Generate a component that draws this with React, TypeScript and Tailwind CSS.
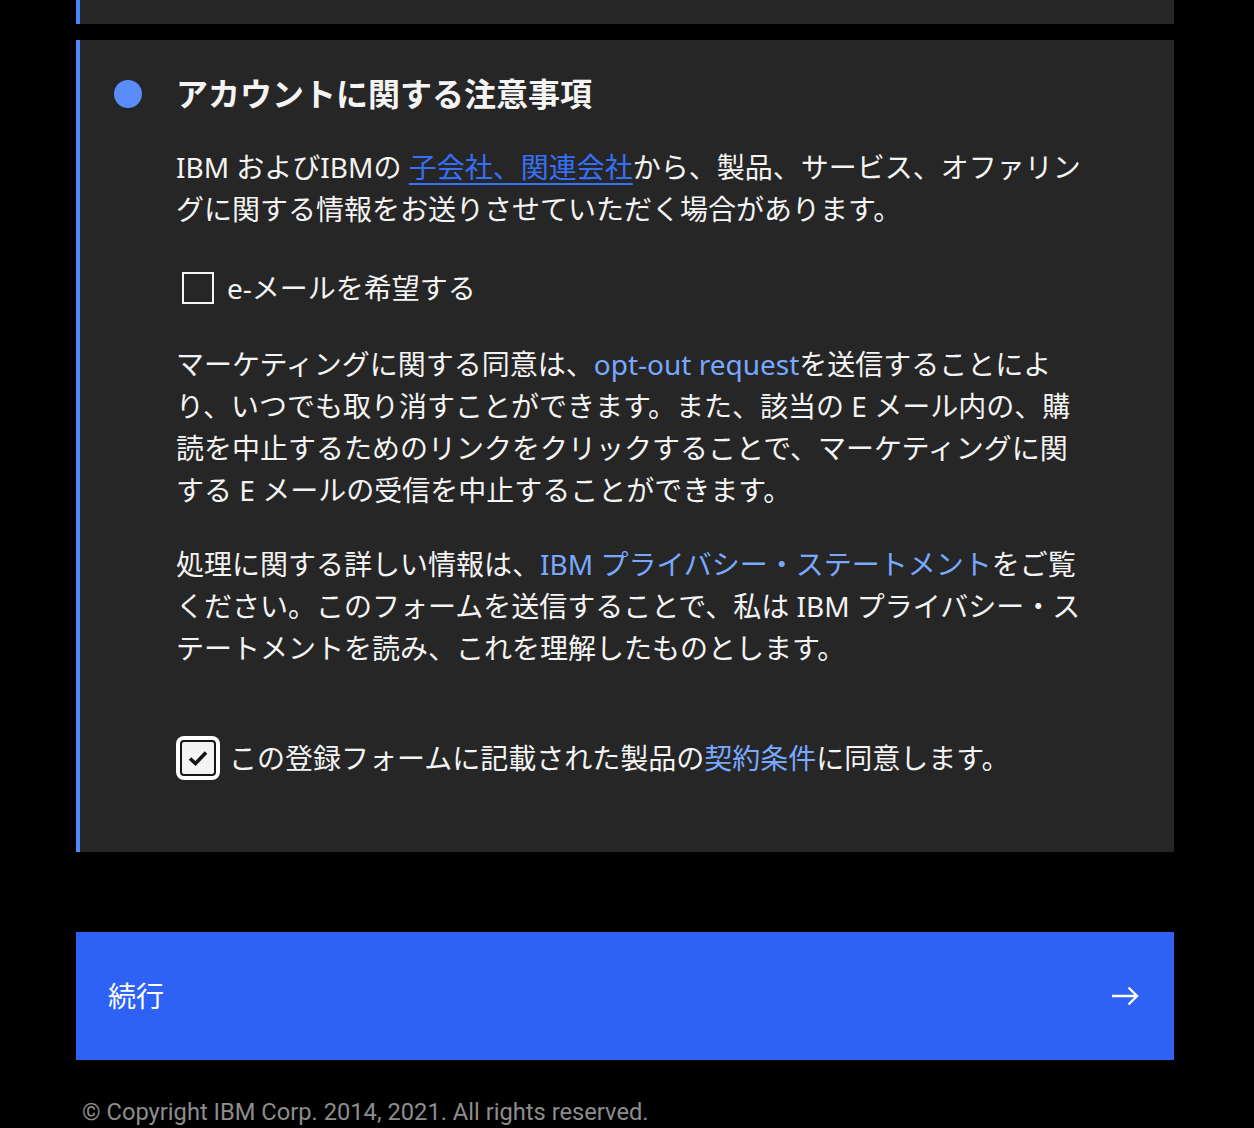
const FONT = "font-['Noto_Sans','Noto_Sans_CJK_JP',sans-serif]";

function LightLink({ children }: { children: React.ReactNode }) {
  return <span className="text-[#78a9ff]">{children}</span>;
}

function ArrowIcon() {
  return (
    <svg width="30" height="30" viewBox="0 0 30 30" fill="none">
      <path
        d="M2 15H27M18.5 6.5L27 15L18.5 23.5"
        stroke="#ffffff"
        strokeWidth="2.4"
      />
    </svg>
  );
}

export default function App() {
  return (
    <div className={`min-h-screen bg-black ${FONT} text-[#f4f4f4]`}>
      <div className="w-[1098px] ml-[76px]">
        {/* previous card, scrolled out of view */}
        <div className="h-6 border-l-4 border-[#4589ff] bg-[#262626]" />

        {/* Account notice */}
        <section className="mt-4 border-l-4 border-[#4f88fb] bg-[#262626] pt-8 pb-[72px] pl-[34px]">
          <div className="flex items-center gap-[34px] h-11">
            <span className="w-7 h-7 rounded-full bg-[#5a8cfa] shrink-0" />
            <h2 className="text-[32px] leading-[44px] font-semibold text-[#f4f4f4]">
              アカウントに関する注意事項
            </h2>
          </div>

          <div className="ml-[62px] w-[920px]">
            <p className="mt-[30px] text-[28px] leading-[42px]">
              IBM およびIBMの{" "}
              <span className="text-[#3670f7] underline underline-offset-[5px] decoration-2">
                子会社、関連会社
              </span>
              から、製品、サービス、オファリン
              <br />
              グに関する情報をお送りさせていただく場合があります。
            </p>

            <label className="mt-[37px] h-[42px] flex items-center gap-[13px] pl-[6px]">
              <span className="w-8 h-8 border-2 border-[#f4f4f4] shrink-0" />
              <span className="text-[28px] leading-[42px]">e-メールを希望する</span>
            </label>

            <p className="mt-[34px] text-[28px] leading-[42px]">
              マーケティングに関する同意は、<LightLink>opt-out request</LightLink>
              を送信することによ
              <br />
              り、いつでも取り消すことができます。また、該当の E メール内の、購
              <br />
              読を中止するためのリンクをクリックすることで、マーケティングに関
              <br />
              する E メールの受信を中止することができます。
            </p>

            <p className="mt-8 text-[28px] leading-[42px]">
              処理に関する詳しい情報は、<LightLink>IBM プライバシー・ステートメント</LightLink>
              をご覧
              <br />
              ください。このフォームを送信することで、私は IBM プライバシー・ス
              <br />
              テートメントを読み、これを理解したものとします。
            </p>

            <label className="mt-[67px] flex items-center gap-[9px]">
              <span className="w-11 h-11 rounded-[8px] bg-white p-1 shrink-0">
                <span className="w-full h-full rounded-[4px] border-2 border-[#161616] bg-[#f4f4f4] flex items-center justify-center">
                  <svg width="22" height="18" viewBox="0 0 22 18" fill="none">
                    <path
                      d="M3 9.5L8.5 14.5L19 3.5"
                      stroke="#161616"
                      strokeWidth="3.6"
                    />
                  </svg>
                </span>
              </span>
              <span className="text-[28px] leading-[42px]">
                この登録フォームに記載された製品の<LightLink>契約条件</LightLink>
                に同意します。
              </span>
            </label>
          </div>
        </section>

        {/* Continue button */}
        <button className="mt-20 w-full h-32 bg-[#2d62f5] flex items-center justify-between pl-8 pr-[34px] text-left">
          <span className="text-[28px] leading-[42px] text-white">続行</span>
          <ArrowIcon />
        </button>

        <p className="mt-9 pl-[6px] font-['Roboto',sans-serif] text-[23.7px] leading-8 text-[#8d8d8d]">
          © Copyright IBM Corp. 2014, 2021. All rights reserved.
        </p>
      </div>
    </div>
  );
}
